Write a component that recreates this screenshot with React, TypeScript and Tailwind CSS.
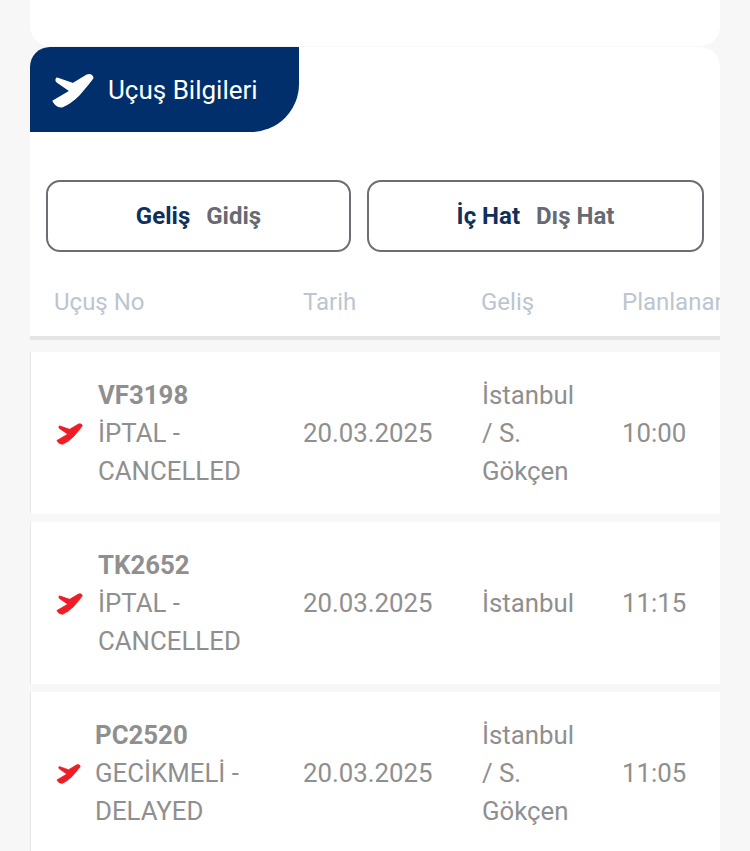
type Flight = {
  code: string;
  status: string[];
  date: string;
  city: string[];
  time: string;
  iconSize: string;
  textGap: string;
};

const flights: Flight[] = [
  {
    code: "VF3198",
    status: ["İPTAL -", "CANCELLED"],
    date: "20.03.2025",
    city: ["İstanbul", "/ S.", "Gökçen"],
    time: "10:00",
    iconSize: "h-[23px] w-[28px]",
    textGap: "ml-[15px]",
  },
  {
    code: "TK2652",
    status: ["İPTAL -", "CANCELLED"],
    date: "20.03.2025",
    city: ["İstanbul"],
    time: "11:15",
    iconSize: "h-[23px] w-[28px]",
    textGap: "ml-[15px]",
  },
  {
    code: "PC2520",
    status: ["GECİKMELİ -", "DELAYED"],
    date: "20.03.2025",
    city: ["İstanbul", "/ S.", "Gökçen"],
    time: "11:05",
    iconSize: "h-[21px] w-[26px]",
    textGap: "ml-[14px]",
  },
];

function Plane({ className }: { className: string }) {
  return (
    <svg viewBox="0 0 44 36" className={className} fill="currentColor" stroke="currentColor" strokeWidth="1.2" strokeLinejoin="round">
      <path d="M7 6 L23 11.500 L37 3 Q42 1.500 43 6 Q38 13 29 23 Q21 31 12 35 Q6 35 3 29 L20 19 L7 10 Q5 8 7 6 Z" />
    </svg>
  );
}

function Toggle({ on, off, className }: { on: string; off: string; className: string }) {
  return (
    <div
      className={`flex h-[72px] items-center justify-center gap-4 rounded-[14px] border-2 border-[#6d6e75] bg-white text-[24px] font-bold ${className}`}
    >
      <span className="text-[#0f2f5c]">{on}</span>
      <span className="text-[#666a73]">{off}</span>
    </div>
  );
}

export default function App() {
  return (
    <div className="h-[851px] w-[750px] overflow-hidden bg-[#f7f7f7] px-[30px] font-['Roboto',sans-serif]">
      {/* top card */}
      <div className="h-[46px] rounded-b-[20px] bg-white" />

      {/* flight info */}
      <div className="mt-px overflow-hidden rounded-t-[20px] bg-white">
        <div className="flex h-[85px] w-[269px] items-center rounded-tl-[16px] rounded-br-[48px] bg-[#012f6b] pl-[20px] text-white">
          <Plane className="h-[36px] w-[44px]" />
          <span className="ml-[14px] text-[26px] leading-none">Uçuş Bilgileri</span>
        </div>

        <div className="mt-[48px] flex gap-4 px-4">
          <Toggle on="Geliş" off="Gidiş" className="w-[305px]" />
          <Toggle on="İç Hat" off="Dış Hat" className="w-[337px]" />
        </div>

        <div className="mt-[28px] grid h-[60px] grid-cols-[273px_178px_141px_98px] border-b-4 border-[#e5e5e6] pb-3 text-[24px] text-[#bcc5d1]">
          <div className="flex items-center pl-6">Uçuş No</div>
          <div className="flex items-center">Tarih</div>
          <div className="flex items-center">Geliş</div>
          <div className="flex items-center overflow-hidden whitespace-nowrap">Planlanan</div>
        </div>
      </div>

      {/* rows */}
      <div className="mt-3 flex flex-col gap-2">
        {flights.map((f) => (
          <div
            key={f.code}
            className="grid h-[162px] grid-cols-[272px_179px_140px_98px] items-center border-l border-[#e8e8e8] bg-white text-[25.800px] leading-[38px] text-[#8f8f8f]"
          >
            <div className="flex items-center pl-[24px]">
              <Plane className={`shrink-0 text-[#ee1c25] ${f.iconSize}`} />
              <div className={f.textGap}>
                <div className="font-bold">{f.code}</div>
                {f.status.map((s) => (
                  <div key={s}>{s}</div>
                ))}
              </div>
            </div>
            <div>{f.date}</div>
            <div>
              {f.city.map((c) => (
                <div key={c}>{c}</div>
              ))}
            </div>
            <div>{f.time}</div>
          </div>
        ))}
      </div>
    </div>
  );
}
